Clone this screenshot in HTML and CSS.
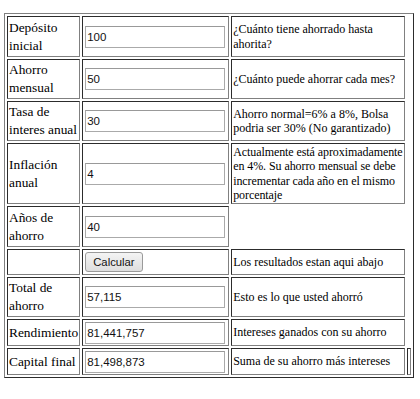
FILE: index.html
```html
<!DOCTYPE html>
<html lang="es">
<head>
  <meta charset="UTF-8" />
  <meta name="viewport" content="width=device-width, initial-scale=1.0"/>
  <title>Calculadora de ahorro</title>
  <link rel="stylesheet" href="styles.css">
</head>
<body>
  <table class="calc">
    <colgroup>
      <col class="c-label">
      <col class="c-field">
      <col class="c-help">
      <col class="c-stub">
    </colgroup>
    <tr class="two first">
      <td class="label">Depósito inicial</td>
      <td><input class="field" type="text" value="100"></td>
      <td class="help">¿Cuánto tiene ahorrado hasta ahorita?</td>
    </tr>
    <tr class="two">
      <td class="label">Ahorro mensual</td>
      <td><input class="field" type="text" value="50"></td>
      <td class="help">¿Cuánto puede ahorrar cada mes?</td>
    </tr>
    <tr class="two">
      <td class="label">Tasa de interes anual</td>
      <td><input class="field" type="text" value="30"></td>
      <td class="help">Ahorro normal=6% a 8%, Bolsa podria ser 30% (No garantizado)</td>
    </tr>
    <tr class="four">
      <td class="label">Inflación anual</td>
      <td><input class="field" type="text" value="4"></td>
      <td class="help tight">Actualmente está aproximadamente<br>en 4%. Su ahorro mensual se debe<br>incrementar cada año en el mismo<br>porcentaje</td>
    </tr>
    <tr class="two first">
      <td class="label">Años de ahorro</td>
      <td><input class="field" type="text" value="40"></td>
      <td class="blank"></td>
    </tr>
    <tr class="btn-row">
      <td class="label">&nbsp;</td>
      <td><button class="btn" type="button">Calcular</button></td>
      <td class="help">Los resultados estan aqui abajo</td>
    </tr>
    <tr class="two">
      <td class="label">Total de ahorro</td>
      <td><input class="field" type="text" value="57,115"></td>
      <td class="help">Esto es lo que usted ahorró</td>
    </tr>
    <tr class="one">
      <td class="label">Rendimiento</td>
      <td><input class="field" type="text" value="81,441,757"></td>
      <td class="help">Intereses ganados con su ahorro</td>
    </tr>
    <tr class="one">
      <td class="label">Capital final</td>
      <td><input class="field" type="text" value="81,498,873"></td>
      <td class="help">Suma de su ahorro más intereses</td>
      <td class="stub"></td>
    </tr>
  </table>
</body>
</html>
```

FILE: styles.css
```css
body {
  margin: 13px 0 0 4px;
  background: #fff;
  color: #000;
  font-family: "Liberation Serif", "Times New Roman", serif;
}
.calc {
  table-layout: fixed;
  border-collapse: separate;
  border-spacing: 2px;
  border: 1px outset #808080;
}
.c-label { width: 72px; }
.c-field { width: 147px; }
.c-help { width: 172px; }
.c-stub { width: 4px; }
.calc td {
  border: 1px inset #808080;
  padding: 1px;
  vertical-align: middle;
}
.calc tr.two { height: 40px; }
.calc tr.two.first { height: 41px; }
.calc tr.four { height: 61px; }
.calc tr.btn-row { height: 26px; }
.calc tr.one { height: 27px; }
.label {
  font-size: 13.4px;
  line-height: 18px;
}
.help {
  font-size: 12px;
  line-height: 14.25px;
}
.help.tight {
  white-space: nowrap;
  letter-spacing: -0.08px;
}
.calc td.blank { border: none; }
.field {
  box-sizing: border-box;
  width: 140px;
  height: 22px;
  margin: 0 0 0 1px;
  padding: 1px 1px;
  border: 1px solid #aaa;
  border-top-color: #999;
  font-family: "Liberation Sans", Arial, sans-serif;
  font-size: 11.5px;
  color: #111;
  display: block;
}
.btn {
  margin: 1px 0 1px 1px;
  height: 20px;
  padding: 0 7px;
  font-family: "Liberation Sans", Arial, sans-serif;
  font-size: 11.3px;
  color: #111;
  background: linear-gradient(#f4f4f4, #dedede);
  border: 1px solid #9a9a9a;
  border-radius: 3px;
}
```
